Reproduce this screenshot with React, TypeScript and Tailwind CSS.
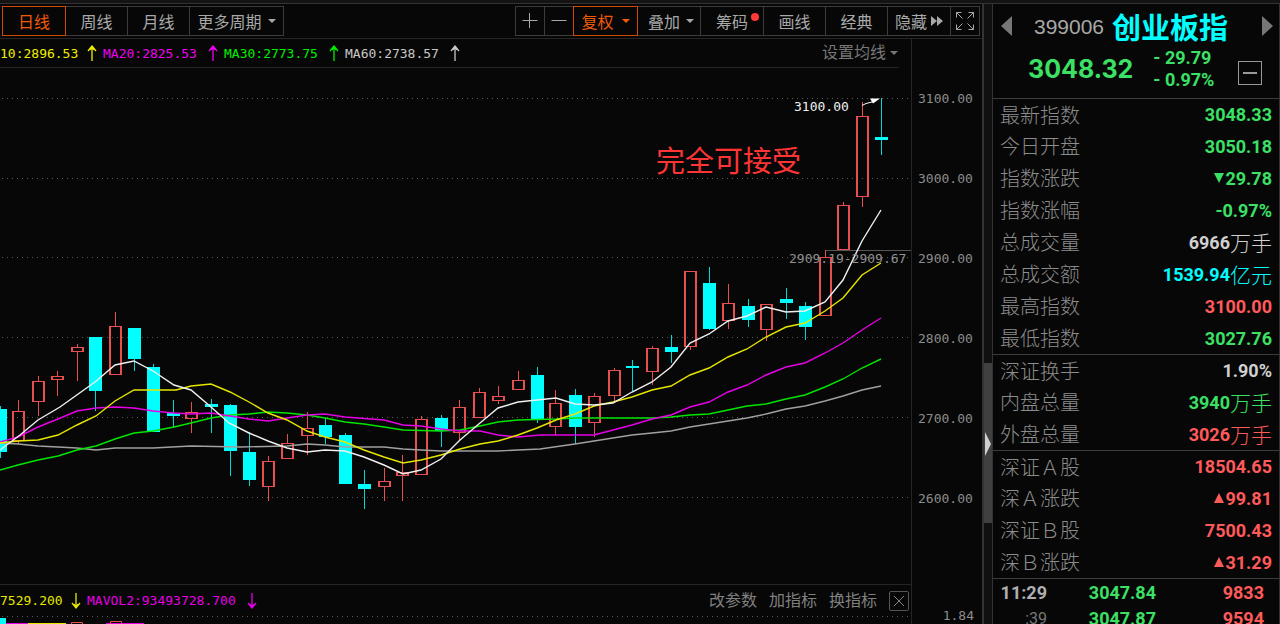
import { ReactNode } from "react";
import clsx from "clsx";

type Candle = {
    x: number
    high: number
    top: number
    bottom: number
    low: number
    up?: boolean
}

type Quote = {
    label: string
    value: string
    unit?: string
    mark?: 'up' | 'down'
    color: string
}

const RED = 'text-[#ff5a5a]';
const GREEN = 'text-[#3be065]';
const CYAN = 'text-[#00ffff]';
const WHITE = 'text-[#d0d0d0]';

const up = (x: number, high: number, top: number, bottom: number, low: number): Candle => ({ x, high, top, bottom, low, up: true });
const down = (x: number, high: number, top: number, bottom: number, low: number): Candle => ({ x, high, top, bottom, low });

// daily candles, in chart coordinates
const candles: Candle[] = [
    down(0, 406, 409, 452, 458), up(18, 400, 411, 440, 444), up(38, 376, 381, 401, 416),
    up(57, 371, 376, 379, 396), up(77, 344, 347, 351, 381), down(95, 337, 337, 391, 411),
    up(115, 312, 326, 374, 374), down(134, 328, 328, 359, 371), down(153, 364, 367, 432, 432),
    down(173, 400, 413, 416, 427), up(191, 402, 412, 418, 433), down(211, 399, 404, 407, 433),
    down(230, 404, 405, 451, 476), down(249, 432, 452, 480, 486), up(268, 456, 461, 486, 501),
    up(287, 434, 443, 458, 458), up(307, 412, 428, 435, 455), down(325, 418, 425, 437, 444),
    down(345, 433, 435, 484, 484), down(364, 470, 484, 489, 509), up(384, 468, 481, 486, 501),
    up(402, 455, 472, 475, 501), up(421, 416, 419, 474, 474), down(441, 415, 418, 431, 447),
    up(459, 400, 407, 432, 441), up(479, 388, 392, 417, 418), up(498, 386, 396, 400, 404),
    up(518, 371, 380, 389, 389), down(537, 367, 375, 419, 423), up(555, 390, 403, 426, 435),
    down(575, 389, 395, 427, 444), up(594, 393, 396, 422, 437), up(614, 368, 370, 395, 403),
    down(632, 360, 366, 368, 391), up(652, 346, 348, 371, 385), down(671, 335, 347, 352, 363),
    up(690, 271, 271, 346, 350), down(709, 267, 283, 329, 330), up(728, 284, 303, 320, 329),
    down(748, 299, 306, 320, 327), up(766, 304, 304, 329, 341), down(786, 288, 299, 303, 319),
    down(805, 302, 306, 327, 340), up(825, 250, 257, 315, 315), up(843, 202, 205, 249, 249),
    up(862, 102, 116, 196, 207), down(881, 98, 137, 140, 155),
];

const averages = [
    { color: '#a0a0a0', points: '0,443 18,444 38,446 58,447 77,448 96,450 115,448 153,448 191,446 240,447 287,446 307,444 325,445 345,447 384,447 403,449 421,450 441,451 498,451 518,450 540,449 575,444 594,441 613,438 632,435 652,433 671,431 690,427 709,424 728,421 747,418 766,414 786,409 805,406 825,401 843,396 862,390 881,386' },
    { color: '#00e600', points: '0,470 18,465 38,460 58,456 77,450 96,446 115,439 134,433 153,431 174,427 191,423 211,418 230,415 249,414 268,412 287,413 307,415 325,418 345,422 364,424 384,427 403,430 441,431 460,430 480,426 498,422 518,420 556,419 575,418 652,418 671,417 690,415 709,414 728,410 747,406 766,404 786,399 805,395 825,387 843,379 862,368 881,359' },
    { color: '#e600e6', points: '0,442 18,437 38,427 58,419 77,411 96,408 115,407 134,408 153,411 174,413 191,414 211,413 230,416 249,419 268,421 287,418 307,415 325,414 345,417 384,420 403,425 421,426 441,429 460,431 480,431 498,435 518,437 540,435 594,435 613,430 632,425 652,419 671,415 690,407 709,402 728,392 747,385 766,375 786,367 805,363 825,353 843,343 862,330 881,318' },
    { color: '#e6e600', points: '0,443 18,441 38,440 58,435 77,425 96,416 115,401 134,390 176,390 191,386 211,384 230,392 249,402 268,413 287,420 307,431 325,437 345,442 364,450 384,457 403,463 421,460 441,455 460,449 480,444 498,441 518,435 537,428 556,420 575,414 594,406 613,402 632,397 652,390 671,386 690,375 709,368 728,357 747,349 766,337 786,327 805,323 825,311 843,298 862,275 881,263' },
    { color: '#f0f0f0', points: '0,450 20,435 38,420 60,407 95,382 115,365 134,361 153,371 174,385 191,390 211,407 229,423 249,433 268,441 287,448 307,452 325,450 345,451 364,457 384,465 403,474 421,470 441,459 460,440 480,423 498,408 518,402 537,400 556,398 575,404 594,405 613,403 632,392 652,382 671,367 690,343 709,334 728,321 747,316 766,307 786,312 805,311 825,302 843,280 862,241 881,210' },
];

const gridLines = [99, 179, 258, 338, 418, 498];
const prices = ['3100.00', '3000.00', '2900.00', '2800.00', '2700.00', '2600.00'];

const sections: Quote[][] = [
    [
        { label: '最新指数', value: '3048.33', color: GREEN },
        { label: '今日开盘', value: '3050.18', color: GREEN },
        { label: '指数涨跌', value: '29.78', mark: 'down', color: GREEN },
        { label: '指数涨幅', value: '-0.97%', color: GREEN },
        { label: '总成交量', value: '6966', unit: '万手', color: WHITE },
        { label: '总成交额', value: '1539.94', unit: '亿元', color: CYAN },
        { label: '最高指数', value: '3100.00', color: RED },
        { label: '最低指数', value: '3027.76', color: GREEN },
    ],
    [
        { label: '深证换手', value: '1.90%', color: WHITE },
        { label: '内盘总量', value: '3940', unit: '万手', color: GREEN },
        { label: '外盘总量', value: '3026', unit: '万手', color: RED },
    ],
    [
        { label: '深证Ａ股', value: '18504.65', color: RED },
        { label: '深Ａ涨跌', value: '99.81', mark: 'up', color: RED },
        { label: '深证Ｂ股', value: '7500.43', color: RED },
        { label: '深Ｂ涨跌', value: '31.29', mark: 'up', color: RED },
    ],
];

function Caret() {
    return (
        <svg className="h-1 w-2 shrink-0" viewBox="0 0 8 4" fill="currentColor">
            <path d="M0 0h8L4 4z" />
        </svg>
    )
}

function Arrow({ down }: { down?: boolean }) {
    return (
        <svg className="h-[18px] w-[10px] shrink-0" viewBox="0 0 10 18" fill="none" stroke="currentColor" strokeWidth="1.3">
            <path d={down ? 'M5 1v15M1 11l4 5l4-5M3 12l2 3l2-3' : 'M5 17V2M1 7l4-5l4 5M3 6l2-3l2 3'} />
        </svg>
    )
}

function ToolButton({ active, width, label, children }: {
    active?: boolean
    width: string
    label?: string
    children: ReactNode
}) {
    return (
        <button
            aria-label={label}
            className={clsx(
                'relative -ml-px flex h-[30px] shrink-0 cursor-pointer items-center justify-center border',
                width,
                active ? 'z-10 border-[#d04a00] text-[#f05a08]' : 'border-[#3c3c3c] text-[#a8a8a8]',
            )}
        >
            {children}
        </button>
    )
}

function Toolbar() {
    return (
        <div className="flex h-[34px] items-center justify-between pr-0.5 pl-[3px]">
            <div className="flex">
                <ToolButton active width="w-16">日线</ToolButton>
                <ToolButton width="w-[63px]">周线</ToolButton>
                <ToolButton width="w-[63px]">月线</ToolButton>
                <ToolButton width="w-[95px]">
                    <span className="mr-1.5">更多周期</span>
                    <Caret />
                </ToolButton>
            </div>
            <div className="flex">
                <ToolButton width="w-[30px]" label="放大">
                    <svg className="size-4" viewBox="0 0 16 16" stroke="currentColor"><path d="M0.500 7.500h15M7.500 0v15" /></svg>
                </ToolButton>
                <ToolButton width="w-[30px]" label="缩小">
                    <svg className="size-4" viewBox="0 0 16 16" stroke="currentColor"><path d="M0.500 7.500h15" /></svg>
                </ToolButton>
                <ToolButton active width="w-[65px]">
                    <span className="mr-2">复权</span>
                    <Caret />
                </ToolButton>
                <ToolButton width="w-16">
                    <span className="mr-1.5 ml-1">叠加</span>
                    <Caret />
                </ToolButton>
                <ToolButton width="w-16">
                    筹码
                    <span className="absolute top-1.5 right-1 size-2 rounded-full bg-[#ff3838]" />
                </ToolButton>
                <ToolButton width="w-[63px]">画线</ToolButton>
                <ToolButton width="w-[63px]">经典</ToolButton>
                <ToolButton width="w-16">
                    <span className="mr-1">隐藏</span>
                    <svg className="h-[10px] w-3" viewBox="0 0 12 10" fill="currentColor"><path d="M0 0l6 5l-6 5zM6 0l6 5l-6 5z" /></svg>
                </ToolButton>
                <ToolButton width="w-[30px]" label="全屏">
                    <svg className="size-[18px]" viewBox="0 0 18 18" fill="none" stroke="currentColor">
                        <path d="M.5 5.500v-5h5M.5.5l6 6M12.500.5h5v5M17.500.5l-6 6M.5 12.500v5h5M.5 17.500l6-6M17.500 12.500v5h-5M17.500 17.500l-6-6" />
                    </svg>
                </ToolButton>
            </div>
        </div>
    )
}

function Indicator({ text, width, color, down }: { text: string, width: string, color: string, down?: boolean }) {
    return (
        <span className={clsx('flex shrink-0 items-center justify-between pr-1.5', width, color)}>
            {text}
            <Arrow down={down} />
        </span>
    )
}

function KLineChart() {
    return (
        <svg className="min-h-0 w-full flex-1" viewBox="0 68 911 516" preserveAspectRatio="none">
            <g stroke="#5a5a5a" strokeDasharray="1 4">
                {gridLines.map((y) => <path key={y} d={`M2 ${y - 0.5}H911`} />)}
            </g>
            <path d="M825 250.500H911" stroke="#555" />
            {candles.map((c) => (
                <g key={c.x} stroke={c.up ? '#e85050' : '#00d8d8'} strokeWidth="1.5" shapeRendering="crispEdges">
                    <path d={`M${c.x + 0.5} ${c.high}V${c.top}M${c.x + 0.5} ${c.bottom}V${c.low}`} />
                    {c.up
                        ? <rect x={c.x - 5} y={c.top + 0.5} width="11" height={c.bottom - c.top} fill="none" />
                        : <rect x={c.x - 6} y={c.top} width="13" height={c.bottom - c.top} fill="#00ffff" stroke="none" />}
                </g>
            ))}
            {averages.map((line) => (
                <polyline key={line.color} points={line.points} fill="none" stroke={line.color} strokeWidth="1.4" />
            ))}
            <path d="M862 105.500l4-2l8-2" fill="none" stroke="#fff" />
            <path d="M870 98.500h10l-7 5z" fill="#fff" />
            <text x="794" y="111" fill="#f0f0f0">3100.00</text>
            <text x="789" y="263" fill="#909090">2909.19-2909.67</text>
            <text x="656" y="172" fill="#ff3535" className="font-['Noto_Sans_CJK_SC',sans-serif] text-[29px]">完全可接受</text>
        </svg>
    )
}

function ChartPanel() {
    return (
        <main className="flex min-w-0 flex-1 flex-col border-r-2 border-[#333]">
            <Toolbar />
            <div className="flex min-h-0 flex-1 border-t border-[#252525] font-['DejaVu_Sans_Mono','Noto_Sans_CJK_SC',monospace] text-[13px]">
                <div className="flex min-w-0 flex-1 flex-col">
                    <div className="mr-3 flex h-[29px] items-center border-b border-[#252525]">
                        <Indicator text="10:2896.53" width="w-[103px]" color="text-[#f0f000]" />
                        <Indicator text="MA20:2825.53" width="w-[121px]" color="text-[#f000f0]" />
                        <Indicator text="MA30:2773.75" width="w-[121px]" color="text-[#00f000]" />
                        <Indicator text="MA60:2738.57" width="w-[121px]" color="text-[#c8c8c8]" />
                        <button className="mr-px ml-auto flex cursor-pointer items-center gap-1 text-base text-[#777]">
                            设置均线
                            <Caret />
                        </button>
                    </div>
                    <KLineChart />
                    <div className="flex h-8 shrink-0 items-center border-t border-[#252525] pr-0.5">
                        <Indicator down text="7529.200" width="w-[87px]" color="text-[#e6e600]" />
                        <Indicator down text="MAVOL2:93493728.700" width="w-[176px]" color="text-[#e600e6]" />
                        <div className="ml-auto flex items-center gap-3 text-base text-[#808080]">
                            <button className="cursor-pointer">改参数</button>
                            <button className="cursor-pointer">加指标</button>
                            <button className="cursor-pointer">换指标</button>
                            <button aria-label="关闭" className="flex size-5 cursor-pointer items-center justify-center rounded-xs border border-[#555]">
                                <svg className="size-[10px]" viewBox="0 0 10 10" stroke="currentColor"><path d="M0 0l10 10M10 0L0 10" /></svg>
                            </button>
                        </div>
                    </div>
                    <svg className="h-2 w-full shrink-0" viewBox="0 616 911 8" preserveAspectRatio="none" fill="none">
                        <path d="M2 616.500H911" stroke="#5a5a5a" strokeDasharray="1 4" />
                        <path d="M0 618h6v6h-6z" fill="#00ffff" />
                        <path d="M6 623.500h22M106 623.500h38" stroke="#e600e6" />
                        <path d="M28 623.500h38" stroke="#e6e600" />
                        <path d="M71.500 625v-2.500h11v2.500M110.500 625v-3.500h11v3.500" stroke="#e85050" />
                    </svg>
                </div>
                <div className="flex w-[71px] shrink-0 flex-col justify-between border-l border-[#252525] text-[#8c8c8c]">
                    <div className="pt-[19px]">
                        {prices.map((price) => (
                            <div key={price} className="flex h-20 items-center pl-1.5">{price}</div>
                        ))}
                    </div>
                    <span className="pr-2 text-right leading-4">1.84</span>
                </div>
            </div>
        </main>
    )
}

function QuoteRow({ quote, first }: { quote: Quote, first: boolean }) {
    return (
        <div className={clsx('flex h-8 items-center justify-between px-[7px]', first && 'border-t border-[#3c3c3c]')}>
            <dt className="text-xl leading-none font-light text-[#8c8c8c]">{quote.label}</dt>
            <dd className={clsx('flex items-center', quote.color)}>
                {quote.mark && (
                    <svg className="h-[10px] w-3" viewBox="0 0 12 10" fill="currentColor">
                        <path d={quote.mark === 'up' ? 'M1 10h10L6 0z' : 'M1 0h10L6 10z'} />
                    </svg>
                )}
                <span className="pt-px font-[Roboto,sans-serif] text-lg leading-none font-bold">{quote.value}</span>
                {quote.unit && <span className="text-[21px] leading-none font-light">{quote.unit}</span>}
            </dd>
        </div>
    )
}

function QuotePanel() {
    return (
        <aside className="w-72 shrink-0 border-x border-[#333]">
            <header className="h-[94px] pt-1">
                <div className="flex h-9 items-center justify-between pr-1.5 pl-2">
                    <button aria-label="上一个" className="cursor-pointer text-[#777]">
                        <svg className="h-5 w-[11px]" viewBox="0 0 11 20" fill="currentColor"><path d="M11 0v20L0 10z" /></svg>
                    </button>
                    <h1 className="flex items-center gap-2 pr-3">
                        <span className="font-['Liberation_Sans',sans-serif] text-[21px] text-[#a8a8a8]">399006</span>
                        <span className="text-[29px] leading-none font-bold text-[#00ffff]">创业板指</span>
                    </h1>
                    <button aria-label="下一个" className="cursor-pointer text-[#777]">
                        <svg className="h-5 w-[11px]" viewBox="0 0 11 20" fill="currentColor"><path d="M0 0v20l11-10z" /></svg>
                    </button>
                </div>
                <div className="flex h-[50px] items-center pr-[17px] pl-[35px] text-[#3be065]">
                    <span className="font-[Inter,sans-serif] text-[25px] leading-none font-bold">3048.32</span>
                    <div className="ml-5 font-[Roboto,sans-serif] text-lg leading-[22px] font-bold">
                        <div>- 29.79</div>
                        <div>- 0.97%</div>
                    </div>
                    <button aria-label="收起" className="mt-2 ml-auto flex size-6 cursor-pointer items-center justify-center border border-[#999]">
                        <span className="h-0.5 w-3.5 bg-[#999]" />
                    </button>
                </div>
            </header>
            <dl>
                {sections.map((section) => section.map((quote, i) => (
                    <QuoteRow key={quote.label} quote={quote} first={i === 0} />
                )))}
            </dl>
            <table className="w-full table-fixed border-t border-[#3c3c3c] font-[Roboto,sans-serif] text-lg leading-[26px] font-bold">
                <tbody>
                    <tr>
                        <td className="w-[54px] pt-px text-right text-[#b0b0b0]">11:29</td>
                        <td className="w-[109px] pt-px text-right text-[#3be065]">3047.84</td>
                        <td className="pt-px pr-[15px] text-right text-[#ff5a5a]">9833</td>
                    </tr>
                    <tr>
                        <td className="text-right text-base leading-[26px] font-normal text-[#777]">:39</td>
                        <td className="text-right text-[#3be065]">3047.87</td>
                        <td className="pr-[15px] text-right text-[#ff5a5a]">9594</td>
                    </tr>
                </tbody>
            </table>
        </aside>
    )
}

export default function App() {
    return (
        <div className="flex h-screen flex-col overflow-hidden bg-[#141414] pt-[3px] font-['Noto_Sans_CJK_SC',sans-serif] text-base leading-none">
            <div className="flex min-h-0 flex-1 border-t border-[#333] bg-[#070707]">
                <ChartPanel />
                <div className="relative w-2 shrink-0 bg-[#101010]">
                    <div className="absolute inset-x-0 top-[359px] h-40 bg-[#404040]" />
                    <svg className="absolute top-[426px] right-px h-7 w-1.5" viewBox="0 0 7 28" fill="#d0d0d0"><path d="M0 0l7 14l-7 14z" /></svg>
                </div>
                <QuotePanel />
            </div>
        </div>
    )
}
